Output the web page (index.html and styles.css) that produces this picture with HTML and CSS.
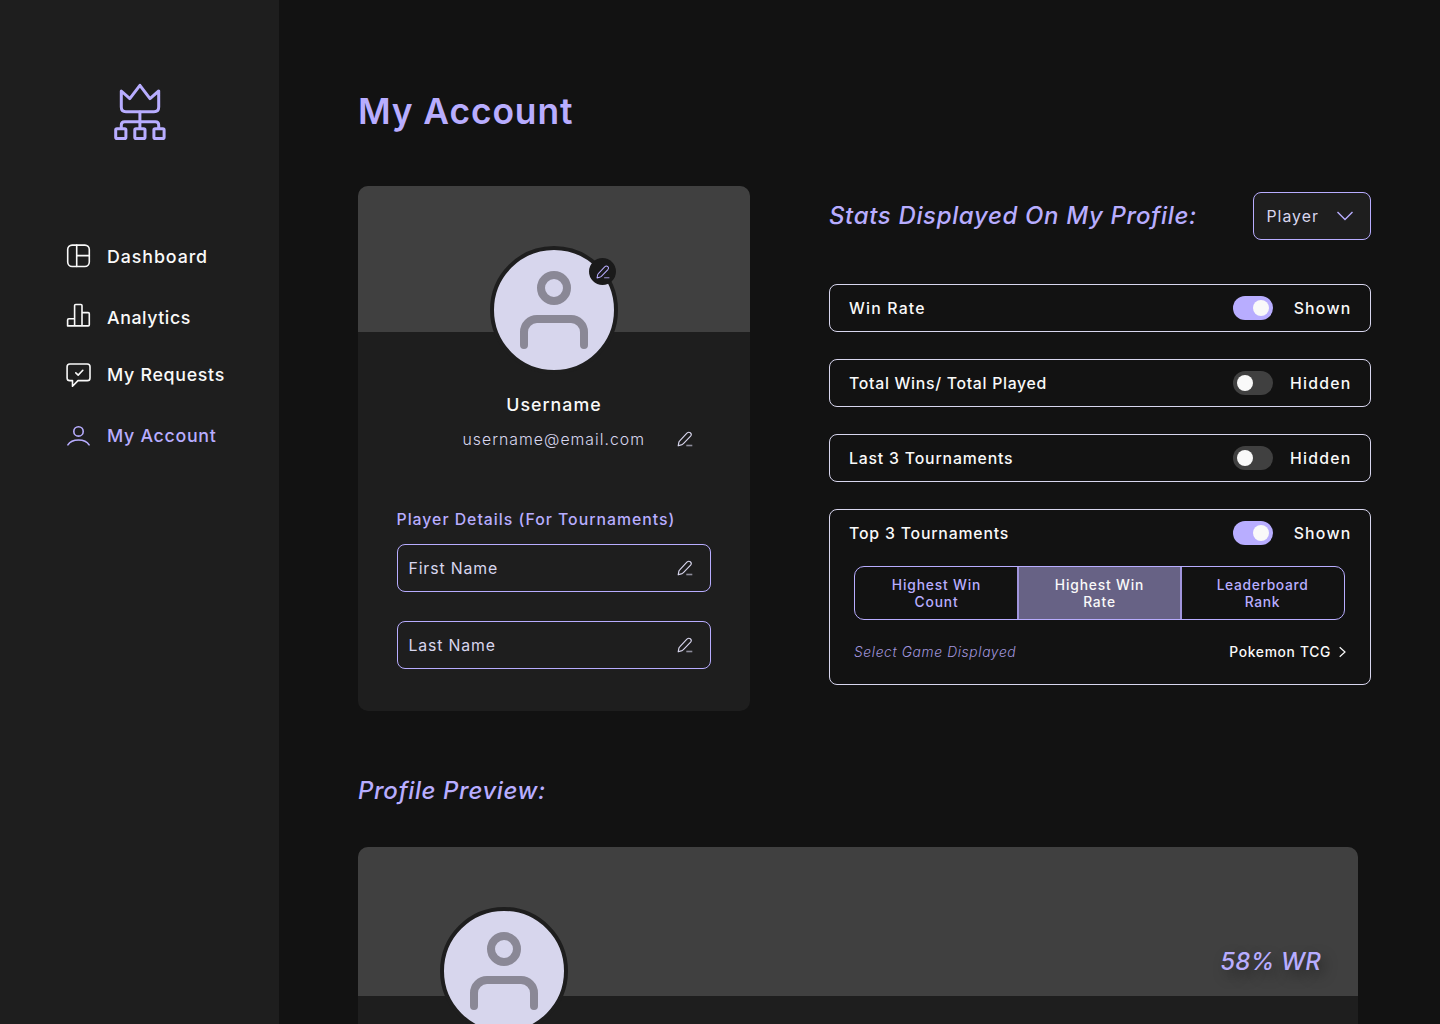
FILE: index.html
```html
<!DOCTYPE html>
<html lang="en">
<head>
<meta charset="utf-8">
<title>My Account</title>
<link rel="stylesheet" href="styles.css">
</head>
<body>
<svg class="defs" width="0" height="0" aria-hidden="true">
  <symbol id="pencil" viewBox="0 0 16 16">
    <path d="M1.2 14.8 L1.9 11.2 Q2.1 10.4 2.7 9.8 L9.9 2.2 Q11.6 .6 13.3 1.7 Q15.1 3.3 13.6 5.2 L6.4 12.7 Q5.8 13.3 5 13.6 Z" fill="none" stroke="currentColor" stroke-width="1.15" stroke-linejoin="round"/>
    <path d="M9.3 14.5 H15.3" stroke="currentColor" stroke-width="1.6" opacity=".6"/>
  </symbol>
  <symbol id="person" viewBox="0 0 120 120">
    <g fill="none" stroke="#8a8896" stroke-width="8" stroke-linecap="round">
      <circle cx="60" cy="38" r="13"/>
      <path d="M30 95 V82 A13 13 0 0 1 43 69 H77 A13 13 0 0 1 90 82 V95"/>
    </g>
  </symbol>
</svg>
<div class="app">
  <aside class="sidebar">
    <svg class="logo" width="54" height="58" viewBox="113 83 54 58" fill="none" stroke="#b8adff" stroke-width="3" stroke-linejoin="round" stroke-linecap="round">
      <path d="M121.3 91 L129.8 98.6 L139.9 85.3 L150 98.6 L158.7 91 V107 Q158.7 111.7 154 111.7 H126 Q121.3 111.7 121.3 107 Z"/>
      <path d="M139.9 112 V128 M121.3 128 V125 Q121.3 121.7 124.6 121.7 H155.4 Q158.7 121.7 158.7 125 V128"/>
      <rect x="115.7" y="128.7" width="10.2" height="9.8" rx="1.3"/>
      <rect x="134.8" y="128.7" width="10.2" height="9.8" rx="1.3"/>
      <rect x="153.9" y="128.7" width="10.2" height="9.8" rx="1.3"/>
    </svg>
    <nav class="nav">
      <a class="nav-item">
        <svg width="26" height="26" viewBox="0 0 26 26"><rect x="2.7" y="2.1" width="21.6" height="21.4" rx="4.4"/><path d="M11.7 2 V23.5 M11.7 12.6 H24.3"/></svg>
        <span class="nav-text dashboard">Dashboard</span>
      </a>
      <a class="nav-item">
        <svg width="26" height="26" viewBox="0 0 26 26"><path d="M2.6 22.9 V17 Q2.6 15.8 3.8 15.8 H9.6 V2.6 Q9.6 1.5 10.7 1.5 H15.9 Q17 1.5 17 2.6 V9.6 H23.1 Q24.3 9.6 24.3 10.8 V21.8 Q24.3 22.9 23.2 22.9 H3.7 Q2.6 22.9 2.6 21.8 V17 M9.6 15.8 V22.9 M17 9.6 V22.9"/></svg>
        <span class="nav-text analytics">Analytics</span>
      </a>
      <a class="nav-item">
        <svg width="26" height="26" viewBox="0 0 26 26"><path d="M4.8 3 H22.3 Q25 3 25 5.7 V16.9 Q25 19.6 22.3 19.6 H13 L7.5 25.3 V19.6 H4.8 Q2.1 19.6 2.1 16.9 V5.7 Q2.1 3 4.8 3 Z M10.8 11.8 L13.2 14.1 L17.8 9.3"/></svg>
        <span class="nav-text">My Requests</span>
      </a>
      <a class="nav-item active">
        <svg width="26" height="26" viewBox="0 0 26 26"><circle cx="13.5" cy="9.4" r="4.7"/><path d="M2.9 22.9 C4.7 19.9 8.5 18 13.5 18 C18.5 18 22.3 19.9 24.1 22.9"/></svg>
        <span class="nav-text">My Account</span>
      </a>
    </nav>
  </aside>

  <main class="main">
    <h1 class="title">My Account</h1>
    <div class="columns">
      <section class="account-card">
        <div class="banner"></div>
        <div class="avatar account-avatar">
          <svg width="120" height="120"><use href="#person"/></svg>
          <span class="avatar-edit"><svg width="14" height="14"><use href="#pencil"/></svg></span>
        </div>
        <div class="username">Username</div>
        <div class="email-row">
          <span class="email">username@email.com</span>
          <svg class="pencil" width="16" height="16"><use href="#pencil"/></svg>
        </div>
        <div class="details-label">Player Details (For Tournaments)</div>
        <div class="field"><span>First Name</span><svg class="pencil" width="16" height="16"><use href="#pencil"/></svg></div>
        <div class="field"><span>Last Name</span><svg class="pencil" width="16" height="16"><use href="#pencil"/></svg></div>
      </section>

      <section class="stats">
        <div class="stats-head">
          <h2 class="heading">Stats Displayed On My Profile:</h2>
          <div class="select"><span>Player</span><svg width="18" height="10" viewBox="0 0 18 10"><path d="M1.5 1 L9 8.6 L16.5 1" fill="none" stroke="#b8adff" stroke-width="1.4"/></svg></div>
        </div>
        <div class="stat">
          <div class="stat-row"><span class="stat-name win-rate">Win Rate</span><span class="toggle on"></span><span class="state">Shown</span></div>
        </div>
        <div class="stat">
          <div class="stat-row"><span class="stat-name total">Total Wins/ Total Played</span><span class="toggle"></span><span class="state">Hidden</span></div>
        </div>
        <div class="stat">
          <div class="stat-row"><span class="stat-name">Last 3 Tournaments</span><span class="toggle"></span><span class="state">Hidden</span></div>
        </div>
        <div class="stat stat-open">
          <div class="stat-row"><span class="stat-name">Top 3 Tournaments</span><span class="toggle on"></span><span class="state">Shown</span></div>
          <div class="segments">
            <div class="segment">Highest Win<br>Count</div>
            <div class="segment selected">Highest Win<br>Rate</div>
            <div class="segment rank">Leaderboard<br>Rank</div>
          </div>
          <div class="game-row">
            <span class="game-label">Select Game Displayed</span>
            <span class="game">Pokemon TCG</span>
            <svg width="9" height="12" viewBox="0 0 9 12"><path d="M1.7 1.2 L7 6 L1.7 10.8" fill="none" stroke="#f9f9f9" stroke-width="1.2"/></svg>
          </div>
        </div>
      </section>
    </div>

    <h2 class="heading preview-heading">Profile Preview:</h2>
    <section class="preview">
      <div class="preview-banner"><span class="rate">58% WR</span></div>
      <div class="avatar preview-avatar"><svg width="120" height="120"><use href="#person"/></svg></div>
    </section>
  </main>
</div>
</body>
</html>
```
FILE: styles.css
```css
* { box-sizing: border-box; }

body {
  margin: 0;
  background: #121212;
  color: #f9f9f9;
  font-family: Inter, "Open Sans", sans-serif;
  font-weight: 500;
}

.defs { position: absolute; }

.app {
  display: flex;
  height: 1024px;
  overflow: hidden;
}

.sidebar {
  width: 279px;
  flex: none;
  background: #1e1e1e;
  padding-top: 83px;
}

.logo { display: block; margin-left: 113px; }

.nav {
  display: flex;
  flex-direction: column;
  margin: 102px 0 0 65px;
}

.nav-item {
  display: flex;
  align-items: center;
  gap: 16px;
  height: 26px;
  margin-bottom: 34px;
}

.nav-item:nth-child(2) { margin-bottom: 32px; }

.nav-item svg {
  fill: none;
  stroke: currentColor;
  stroke-width: 1.6;
  stroke-linejoin: round;
  stroke-linecap: round;
}

.nav-item.active { color: #b8adff; }

.nav-item:nth-child(4) { margin-top: 1px; }

.nav-text {
  padding-top: 2px;
  font-size: 17.8px;
  letter-spacing: .7px;
  line-height: 26px;
}

.dashboard { letter-spacing: .92px; }
.nav-text.analytics { padding-top: 4px; letter-spacing: .55px; }

.main {
  flex: 1;
  padding: 90px 69px 0 79px;
}

.title {
  margin: 0 0 52px;
  font-size: 35.4px;
  font-weight: 600;
  letter-spacing: .88px;
  line-height: 44px;
  color: #b8adff;
}

.columns {
  display: flex;
  gap: 79px;
  height: 525px;
}

.account-card {
  display: flex;
  flex-direction: column;
  width: 392px;
  flex: none;
  background: #1e1e1e;
  border-radius: 10px;
  overflow: hidden;
}

.banner {
  height: 146px;
  flex: none;
  background: #404040;
}

.avatar {
  position: relative;
  width: 128px;
  height: 128px;
  flex: none;
  border: 4px solid #1e1e1e;
  border-radius: 50%;
  background: #d7d6ed;
}

.avatar > svg { display: block; }

.account-avatar { margin: -86px auto 0; }

.avatar-edit {
  position: absolute;
  left: 95px;
  top: 8px;
  width: 27px;
  height: 27px;
  display: flex;
  align-items: center;
  justify-content: center;
  border-radius: 50%;
  background: #1a1a1a;
  color: #b8adff;
}

.username {
  margin-top: 18px;
  text-align: center;
  font-size: 17.8px;
  letter-spacing: 1px;
  line-height: 26px;
}

.email-row {
  display: flex;
  align-items: center;
  justify-content: space-between;
  margin-top: 9px;
  padding: 0 57.5px 0 104.5px;
  height: 24px;
}

.email {
  font-size: 15.8px;
  font-weight: 300;
  letter-spacing: 1.02px;
  color: #d8d6ee;
}

.pencil { color: #d8d6ee; }

.details-label {
  margin: 57px 0 12px 38.5px;
  font-size: 15.8px;
  letter-spacing: 1px;
  line-height: 24px;
  color: #b8adff;
}

.field {
  display: flex;
  align-items: center;
  justify-content: space-between;
  height: 48px;
  margin: 0 39px 29px;
  padding: 0 17.5px 0 10.5px;
  border: 1px solid #b8adff;
  border-radius: 8px;
  font-size: 15.8px;
  font-weight: 400;
  letter-spacing: .86px;
  color: #d8d6ee;
}

.stats { flex: 1; padding-top: 6px; }

.stats-head {
  display: flex;
  align-items: center;
  justify-content: space-between;
  height: 48px;
  margin-bottom: 44px;
}

.heading {
  margin: 0;
  font-size: 24px;
  font-weight: 500;
  font-style: italic;
  letter-spacing: .64px;
  line-height: 32px;
  color: #b8adff;
}

.select {
  display: flex;
  align-items: center;
  justify-content: space-between;
  width: 118px;
  height: 48px;
  padding: 0 16px 0 12.5px;
  border: 1px solid #b8adff;
  border-radius: 8px;
  background: #1e1e1e;
  color: #d8d6ee;
  font-size: 15.8px;
  font-weight: 400;
  letter-spacing: 1.02px;
}

.stat {
  height: 48px;
  margin-bottom: 27px;
  border: 1px solid #d8d6ee;
  border-radius: 8px;
}

.stat-open { height: 176px; }

.stat-row {
  display: flex;
  align-items: center;
  height: 46px;
  padding: 0 18.5px 0 19px;
  font-size: 15.8px;
}

.stat-name { flex: 1; letter-spacing: .82px; }
.win-rate { letter-spacing: 1.2px; }
.total { letter-spacing: .71px; }

.toggle {
  width: 40px;
  height: 24px;
  margin-right: .5px;
  padding: 4px;
  border-radius: 12px;
  background: #404040;
}

.toggle::before {
  content: "";
  display: block;
  width: 16px;
  height: 16px;
  border-radius: 50%;
  background: #f9f9f9;
}

.toggle.on { background: #b8adff; }
.toggle.on::before { margin-left: 16px; }

.state {
  width: 78px;
  text-align: right;
  letter-spacing: 1.25px;
}

.segments {
  display: flex;
  height: 54px;
  margin: 10px 25px 0 24px;
  border: 1px solid #b8adff;
  border-radius: 10px;
  overflow: hidden;
}

.segment {
  flex: 1;
  padding-top: 10px;
  text-align: center;
  font-size: 13.8px;
  line-height: 17px;
  letter-spacing: .84px;
  color: #b8adff;
}

.segment.rank { letter-spacing: .65px; }

.segment.selected {
  background: #676285;
  color: #f9f9f9;
  box-shadow: -1px 0 #a195dd, 1px 0 #a195dd, inset 1px 0 #a195dd, inset -1px 0 #a195dd;
}

.game-row {
  display: flex;
  align-items: center;
  height: 24px;
  margin: 20px 23px 0 24px;
  font-size: 13.8px;
}

.game-label {
  flex: 1;
  font-weight: 300;
  font-style: italic;
  letter-spacing: .63px;
  color: #a195dd;
}

.game { margin-right: 7px; letter-spacing: .68px; }

.preview-heading { margin: 64px 0 40px; letter-spacing: .57px; }

.preview {
  width: 1000px;
  height: 420px;
  border-radius: 10px;
  background: #1e1e1e;
  overflow: hidden;
}

.preview-banner {
  display: flex;
  justify-content: flex-end;
  align-items: flex-end;
  height: 149px;
  padding: 0 37px 18px 0;
  background: #404040;
}

.rate {
  font-size: 24px;
  font-style: italic;
  letter-spacing: .16px;
  line-height: 32px;
  color: #b8adff;
  text-shadow: 4px 6px 14px rgba(0, 0, 0, .45);
}

.preview-avatar { margin: -89px 0 0 82px; }
```
